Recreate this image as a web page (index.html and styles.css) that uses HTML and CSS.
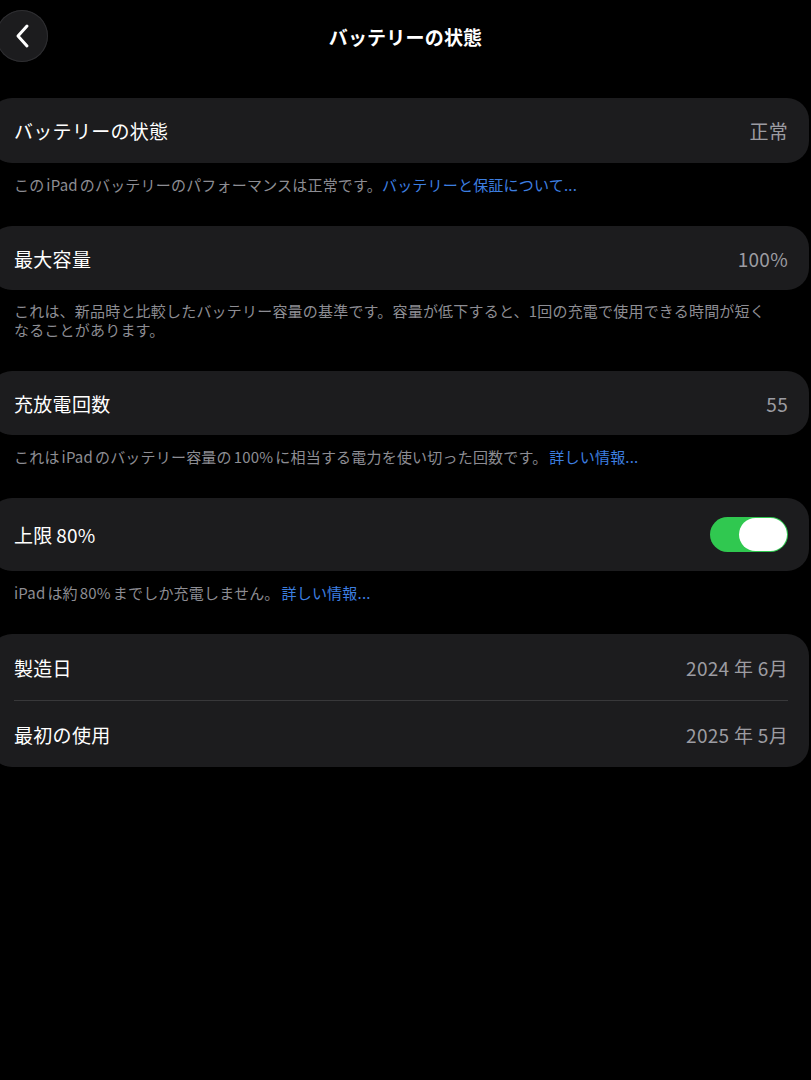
FILE: index.html
```html
<!DOCTYPE html>
<html lang="ja">
<head>
<meta charset="utf-8">
<link rel="stylesheet" href="styles.css">
</head>
<body>
<div class="page">
  <header class="nav">
    <div class="back">
      <svg width="20" height="26" viewBox="0 0 20 26"><path d="M14 3 L5 13 L14 23" fill="none" stroke="#fff" stroke-width="3" stroke-linecap="round" stroke-linejoin="round"/></svg>
    </div>
    <h1 class="title">バッテリーの状態</h1>
  </header>

  <section class="group">
    <div class="card">
      <div class="row first"><span class="label">バッテリーの状態</span><span class="value">正常</span></div>
    </div>
    <p class="foot">この iPad のバッテリーのパフォーマンスは正常です。<span class="link">バッテリーと保証について...</span></p>
  </section>

  <section class="group">
    <div class="card">
      <div class="row"><span class="label">最大容量</span><span class="value">100%</span></div>
    </div>
    <p class="foot multi">これは、新品時と比較したバッテリー容量の基準です。容量が低下すると、1回の充電で使用できる時間が短くなることがあります。</p>
  </section>

  <section class="group">
    <div class="card">
      <div class="row"><span class="label">充放電回数</span><span class="value">55</span></div>
    </div>
    <p class="foot">これは iPad のバッテリー容量の 100% に相当する電力を使い切った回数です。 <span class="link">詳しい情報...</span></p>
  </section>

  <section class="group">
    <div class="card">
      <div class="row tall"><span class="label">上限 80%</span><span class="toggle"><span class="knob"></span></span></div>
    </div>
    <p class="foot">iPad は約 80% までしか充電しません。 <span class="link">詳しい情報...</span></p>
  </section>

  <section class="group">
    <div class="card">
      <div class="row r66"><span class="label">製造日</span><span class="value">2024 年 6月</span></div>
      <div class="sep"></div>
      <div class="row r66"><span class="label">最初の使用</span><span class="value">2025 年 5月</span></div>
    </div>
  </section>
</div>
</body>
</html>
```

FILE: styles.css
```css
html, body {
  margin: 0;
  padding: 0;
  background: #000;
}
body {
  font-family: "Noto Sans CJK JP", "Noto Sans", sans-serif;
  color: #fff;
  overflow: hidden;
  width: 811px;
  height: 1080px;
}
.page {
  width: 811px;
}
.nav {
  height: 98px;
  position: relative;
  display: flex;
  justify-content: center;
}
.back {
  position: absolute;
  left: -4px;
  top: 10px;
  width: 52px;
  height: 52px;
  border-radius: 50%;
  background: #1c1c1e;
  box-shadow: inset 0 0 0 1px #2e2e31;
  display: flex;
  align-items: center;
  justify-content: center;
}
.back svg {
  margin-left: 2px;
}
.title {
  margin: 0;
  margin-top: 24px;
  height: 26px;
  line-height: 26px;
  font-size: 19px;
  font-weight: 700;
  letter-spacing: 0.2px;
}
.group {
  margin-bottom: 32px;
}
.card {
  margin-left: -10px;
  width: 819px;
  background: #1c1c1e;
  border-radius: 22px;
  box-sizing: border-box;
  padding: 0 21px 0 24px;
}
.row {
  height: 64px;
  display: flex;
  align-items: center;
  justify-content: space-between;
}
.row.first {
  height: 65px;
}
.row.tall {
  height: 73px;
}
.row.r66 {
  height: 66px;
}
.label {
  font-size: 19px;
  letter-spacing: 0.3px;
  word-spacing: -1px;
  color: #fff;
}
.value {
  font-size: 19px;
  color: #9c9ca2;
  letter-spacing: 0.3px;
}
.sep {
  height: 1px;
  background: #38383a;
}
.foot {
  margin: 12px 0 0 0;
  padding: 0 41px 0 14px;
  font-size: 15px;
  line-height: 19px;
  color: #8d8d93;
  letter-spacing: 0.2px;
  word-spacing: -1.6px;
}
.foot.multi {
  line-height: 18.5px;
}
.link {
  color: #3d7fe0;
}
.toggle {
  width: 78px;
  height: 35px;
  border-radius: 18px;
  background: #30c850;
  display: flex;
  align-items: center;
  justify-content: flex-end;
  padding: 0 1px;
  box-sizing: border-box;
}
.knob {
  width: 48px;
  height: 33px;
  border-radius: 17px;
  background: #fff;
}
```
